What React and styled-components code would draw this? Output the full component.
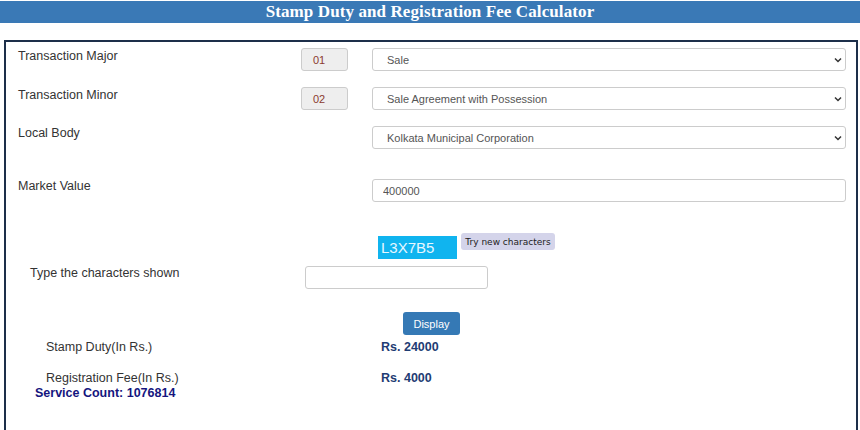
import React from "react";
import styled, { createGlobalStyle } from "styled-components";

const Global = createGlobalStyle`
  html, body { margin: 0; padding: 0; background: #fff; }
  body { font-family: "Liberation Sans", Arial, sans-serif; width: 860px; height: 430px; overflow: hidden; }
  * { box-sizing: border-box; }
`;

const Page = styled.div`
  width: 860px;
  padding-top: 1px;
`;

const Header = styled.div`
  height: 22px;
  background: #3a79b6;
  display: flex;
  align-items: center;
  justify-content: center;
`;

const Title = styled.h1`
  margin: 0;
  font-family: "Liberation Serif", "Times New Roman", serif;
  font-weight: bold;
  font-size: 17px;
  color: #fff;
  letter-spacing: 0.1px;
`;

const Panel = styled.div`
  margin: 17px 2px 0 4px;
  border: 2px solid #1d2f4a;
  border-bottom: none;
  height: 400px;
  padding: 6px 11px 0 12px;
`;

const FormGrid = styled.div`
  display: grid;
  grid-template-columns: 283px 71px 474px;
  row-gap: 16px;
`;

const Label = styled.div`
  font-size: 12.5px;
  line-height: 15px;
  color: #333;
  margin-top: ${(p) => p.$top || 0}px;
  padding-left: ${(p) => p.$indent || 0}px;
`;

const CodeBox = styled.div`
  width: 47px;
  height: 23px;
  background: #eee;
  border: 1px solid #ccc;
  border-radius: 3px;
  font-size: 11px;
  color: #8b3a2e;
  padding-left: 11px;
  display: flex;
  align-items: center;
`;

const SelectWrap = styled.div`
  position: relative;
  grid-column: 3;
  margin-top: ${(p) => p.$top || 0}px;
`;

const Select = styled.select`
  appearance: none;
  width: 100%;
  height: 23px;
  border: 1px solid #ccc;
  border-radius: 3px;
  background: #fff;
  font-family: "Liberation Sans", Arial, sans-serif;
  font-size: 11px;
  color: #555;
  padding: 0 0 0 14px;
  outline: none;
`;

const Chevron = styled.svg`
  position: absolute;
  right: 4px;
  top: 9px;
  width: 8px;
  height: 6px;
  pointer-events: none;
`;

const TextInput = styled.input`
  width: ${(p) => p.$w || "100%"};
  height: 23px;
  border: 1px solid #ccc;
  border-radius: 3px;
  background: #fff;
  font-family: "Liberation Sans", Arial, sans-serif;
  font-size: 11px;
  color: #555;
  padding: 0 0 0 10px;
  outline: none;
`;

const CaptchaRow = styled.div`
  display: flex;
  align-items: flex-start;
  gap: 4px;
  margin-top: 31px;
  padding-left: 360px;
`;

const CaptchaBox = styled.div`
  width: 79px;
  height: 23px;
  margin-top: 3px;
  background: #10b4ef;
  color: #e6f7ff;
  font-size: 15px;
  line-height: 23px;
  padding-left: 3px;
`;

const RefreshButton = styled.button`
  height: 17px;
  width: 94px;
  border: none;
  border-radius: 3px;
  background: #d4d4ea;
  color: #222;
  font-family: "DejaVu Sans", Verdana, sans-serif;
  font-size: 9px;
  padding: 0;
`;

const CharRow = styled.div`
  display: grid;
  grid-template-columns: 287px 183px;
  align-items: start;
  margin-top: 7px;
`;

const ButtonRow = styled.div`
  display: flex;
  padding-left: 385px;
  margin-top: 23px;
`;

const PrimaryButton = styled.button`
  width: 57px;
  height: 23px;
  border: none;
  border-radius: 3px;
  background: #3579b5;
  color: #fff;
  font-family: "Liberation Sans", Arial, sans-serif;
  font-size: 11px;
  padding: 0;
`;

const ResultRow = styled.div`
  display: grid;
  grid-template-columns: 335px auto;
  padding-left: 28px;
  margin-top: ${(p) => p.$top}px;
  line-height: 15px;
`;

const Value = styled.div`
  font-size: 12.5px;
  font-weight: bold;
  color: #1f3c73;
`;

const ServiceCount = styled.div`
  font-size: 12.5px;
  font-weight: bold;
  color: #15157e;
  padding-left: 17px;
  line-height: 15px;
`;

const Arrow = () => (
  <Chevron viewBox="0 0 8 6">
    <path d="M1 1.5 L4 4.5 L7 1.5" fill="none" stroke="#333" strokeWidth="1.5" />
  </Chevron>
);

const DropDown = ({ value, top }) => (
  <SelectWrap $top={top}>
    <Select defaultValue={value}>
      <option>{value}</option>
    </Select>
    <Arrow />
  </SelectWrap>
);

export default function App() {
  return (
    <Page>
      <Global />
      <Header>
        <Title>Stamp Duty and Registration Fee Calculator</Title>
      </Header>
      <Panel>
        <FormGrid>
          <Label $top={1}>Transaction Major</Label>
          <CodeBox>01</CodeBox>
          <DropDown value="Sale" />
          <Label $top={1}>Transaction Minor</Label>
          <CodeBox>02</CodeBox>
          <DropDown value="Sale Agreement with Possession" />
          <Label>Local Body</Label>
          <div />
          <DropDown value="Kolkata Municipal Corporation" />
          <Label $top={14}>Market Value</Label>
          <div />
          <SelectWrap $top={14}>
            <TextInput defaultValue="400000" />
          </SelectWrap>
        </FormGrid>
        <CaptchaRow>
          <CaptchaBox>L3X7B5</CaptchaBox>
          <RefreshButton>Try new characters</RefreshButton>
        </CaptchaRow>
        <CharRow>
          <Label $indent={12}>Type the characters shown</Label>
          <TextInput $w="183px" />
        </CharRow>
        <ButtonRow>
          <PrimaryButton>Display</PrimaryButton>
        </ButtonRow>
        <ResultRow $top={5}>
          <Label>Stamp Duty(In Rs.)</Label>
          <Value>Rs. 24000</Value>
        </ResultRow>
        <ResultRow $top={16}>
          <Label>Registration Fee(In Rs.)</Label>
          <Value>Rs. 4000</Value>
        </ResultRow>
        <ServiceCount>Service Count: 1076814</ServiceCount>
      </Panel>
    </Page>
  );
}
